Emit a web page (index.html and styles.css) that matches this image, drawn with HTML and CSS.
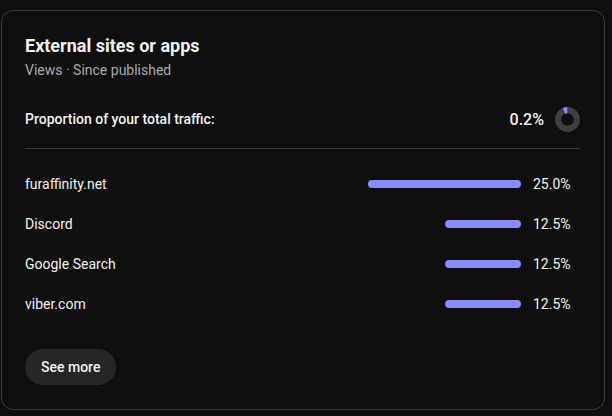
FILE: index.html
```html
<!DOCTYPE html>
<html lang="en">
<head>
  <meta charset="UTF-8">
  <meta name="viewport" content="width=device-width, initial-scale=1.0">
  <title>External sites or apps</title>
  <link rel="stylesheet" href="styles.css">
</head>
<body>
  <!-- Card -->
  <section class="card">
    <h2 class="card-title">External sites or apps</h2>
    <div class="card-subtitle">Views · Since published</div>

    <!-- Total proportion -->
    <div class="summary">
      <span class="summary-label">Proportion of your total traffic:</span>
      <div class="summary-value">
        <span>0.2%</span>
        <svg class="donut" width="25" height="25" viewBox="0 0 24 24">
          <circle cx="12" cy="12" r="9" fill="none" stroke="#3f3f3f" stroke-width="6"/>
          <circle cx="12" cy="12" r="9" fill="none" stroke="#8c89ff" stroke-width="6"
                  stroke-dasharray="3.2 60" transform="rotate(-112 12 12)"/>
        </svg>
      </div>
    </div>

    <!-- Sources -->
    <ul class="source-list">
      <li class="source-row">
        <span class="source-name">furaffinity.net</span>
        <div class="bar-track"><div class="bar" style="width: 153px"></div></div>
        <span class="source-pct">25.0%</span>
      </li>
      <li class="source-row">
        <span class="source-name">Discord</span>
        <div class="bar-track"><div class="bar" style="width: 76px"></div></div>
        <span class="source-pct">12.5%</span>
      </li>
      <li class="source-row">
        <span class="source-name">Google Search</span>
        <div class="bar-track"><div class="bar" style="width: 76px"></div></div>
        <span class="source-pct">12.5%</span>
      </li>
      <li class="source-row">
        <span class="source-name">viber.com</span>
        <div class="bar-track"><div class="bar" style="width: 76px"></div></div>
        <span class="source-pct">12.5%</span>
      </li>
    </ul>

    <button class="see-more">See more</button>
  </section>
</body>
</html>
```

FILE: styles.css
```css
body {
  font-family: Roboto, "Liberation Sans", Arial, sans-serif;
  margin: 0;
  padding: 10px 0 0 1px;
  background-color: #0f0f0f;
  color: #f1f1f1;
}
.card {
  box-sizing: border-box;
  width: 604px;
  height: 400px;
  padding: 23px 24px 23px 23px;
  border: 1px solid #3e3e3e;
  border-radius: 12px;
}
.card-title {
  margin: 0;
  font-size: 18px;
  font-weight: 700;
  line-height: 24px;
}
.card-subtitle {
  margin-top: 2px;
  font-size: 14px;
  line-height: 20px;
  color: #aaaaaa;
}
.summary {
  display: flex;
  justify-content: space-between;
  align-items: center;
  height: 30px;
  margin-top: 24px;
  padding-bottom: 14px;
  border-bottom: 1px solid #3e3e3e;
}
.summary-label {
  font-size: 14px;
  font-weight: 500;
}
.summary-value {
  display: flex;
  align-items: center;
  gap: 11px;
  font-size: 16px;
  font-weight: 500;
}
.donut {
  display: block;
}
.source-list {
  list-style: none;
  margin: 15px 0 0;
  padding: 0;
}
.source-row {
  display: flex;
  align-items: center;
  height: 40px;
  font-size: 14px;
}
.source-name {
  flex: 1;
}
.bar-track {
  display: flex;
  justify-content: flex-end;
}
.bar {
  height: 8px;
  border-radius: 4px;
  background-color: #8c89ff;
}
.source-pct {
  width: 47px;
  margin-left: 12px;
}
.see-more {
  margin-top: 25px;
  height: 36px;
  padding: 0 16px;
  border: none;
  border-radius: 18px;
  background-color: #272727;
  color: #f1f1f1;
  font-family: inherit;
  font-size: 14px;
  font-weight: 500;
  cursor: pointer;
}
```
